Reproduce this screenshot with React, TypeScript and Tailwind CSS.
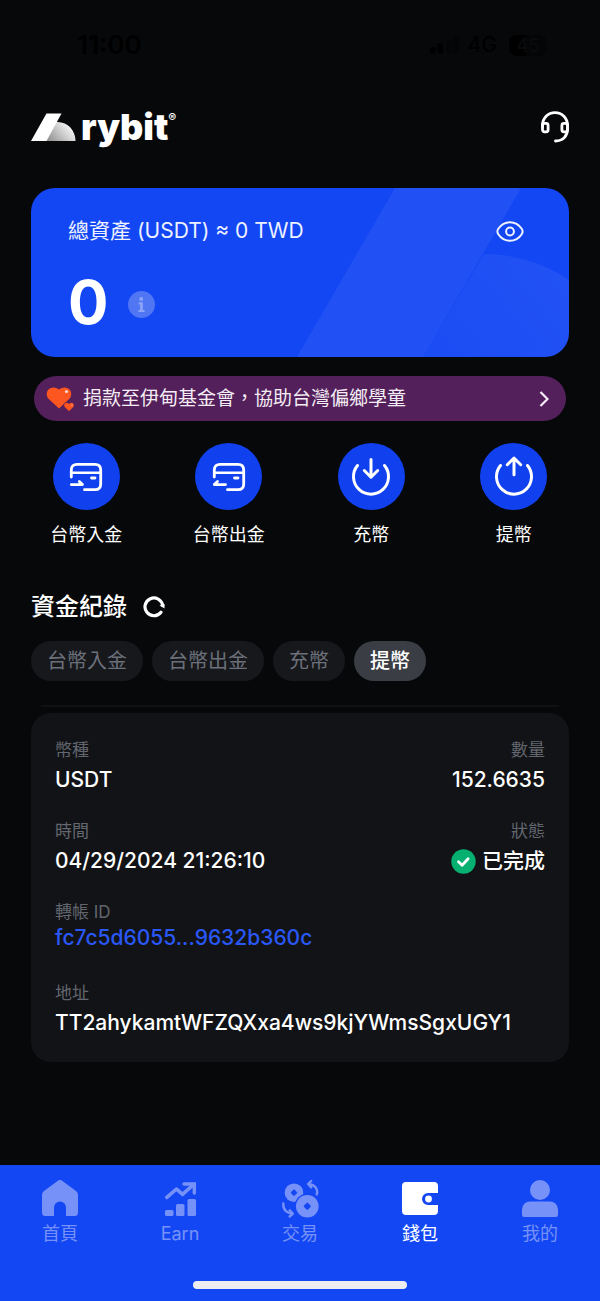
import { useState } from 'react';
import type { ReactNode } from 'react';

const actions = [
  { label: '台幣入金', icon: <CardIcon arrow="in" /> },
  { label: '台幣出金', icon: <CardIcon arrow="out" /> },
  { label: '充幣', icon: <TransferIcon direction="down" /> },
  { label: '提幣', icon: <TransferIcon direction="up" /> },
];

const filters = ['台幣入金', '台幣出金', '充幣', '提幣'];

const tabs = [
  { label: '首頁', icon: <HomeIcon /> },
  { label: 'Earn', icon: <EarnIcon /> },
  { label: '交易', icon: <TradeIcon /> },
  { label: '錢包', icon: <WalletIcon /> },
  { label: '我的', icon: <ProfileIcon /> },
];

function StatusBar() {
  return (
    <div className="flex items-center justify-between pl-[77px] pr-[53px] pt-[30px] text-black">
      <span className="text-[26px] leading-[30px] font-semibold">11:00</span>
      <div className="flex items-center gap-2">
        <svg width="30" height="20" viewBox="0 0 32 20" fill="currentColor">
          <rect x="0" y="12" width="6" height="7" rx="2" />
          <rect x="8" y="8" width="6" height="11" rx="2" />
          <rect x="17" y="4" width="6" height="15" rx="2" opacity="0.3" />
          <rect x="25" y="0" width="6" height="19" rx="2" opacity="0.3" />
        </svg>
        <span className="text-[21px] leading-[30px] font-medium">4G</span>
        <span className="ml-1 h-[21px] w-[38px] rounded-[7px] bg-linear-to-r from-black from-45% to-[#040506] to-45% text-center text-[18px] leading-[21px] font-semibold text-[#090a0b]">
          45
        </span>
      </div>
    </div>
  );
}

function Logo() {
  return (
    <div className="flex items-center text-white">
      <svg width="45" height="28" viewBox="0 0 45 28">
        <defs>
          <linearGradient id="dome" x1="16" y1="28" x2="38" y2="8" gradientUnits="userSpaceOnUse">
            <stop offset="0" stopColor="#8d8d8d" />
            <stop offset="1" stopColor="#fff" />
          </linearGradient>
        </defs>
        <path d="M25 9C36 8 44.500 17 44.500 28H15z" fill="url(#dome)" />
        <path d="M15.500 .5H30.500L15.500 28H0z" fill="#fff" />
      </svg>
      <span className="ml-[5px] text-[36px] leading-[36px] font-black">rybit</span>
      <span className="mb-[18px] text-[12px] leading-[10px] font-semibold">®</span>
    </div>
  );
}

function HeadsetIcon() {
  return (
    <svg width="28" height="32" viewBox="0 0 28 32" fill="none" stroke="currentColor" strokeWidth="2.800" strokeLinecap="round">
      <path d="M1.500 16V14.500C1.500 7 7 1.700 14 1.700S26.500 7 26.500 14.500V18c0 7-4.500 12-12 12" />
      <rect x="1.500" y="12.400" width="5.600" height="8.400" rx="2" />
      <rect x="20.900" y="12.400" width="5.600" height="8.400" rx="2" />
    </svg>
  );
}

function EyeIcon() {
  return (
    <svg width="28" height="21" viewBox="0 0 28 21" fill="none" stroke="currentColor" strokeWidth="2">
      <path d="M14 1.200c5.500 0 9.300 3 11.700 6.600 1.200 1.800 1.200 3.600 0 5.400C23.300 16.800 19.500 19.800 14 19.800S4.700 16.800 2.300 13.200c-1.200-1.800-1.200-3.600 0-5.400C4.700 4.200 8.500 1.200 14 1.200z" />
      <circle cx="14" cy="10.500" r="3.900" />
    </svg>
  );
}

function HeartsIcon() {
  return (
    <svg width="29" height="26" viewBox="0 0 29 26">
      <path d="M13 22.500L2.500 12.700C.2 10.400.2 5.800 2.500 3.500 5 .8 9.500.6 13 3.500 16.500.6 21 .8 23.500 3.500c2.300 2.300 2.300 6.900 0 9.200z" fill="#fd5621" />
      <path d="M23 25.500l-4.500-4.300c-2.300-3 1.500-6.500 4.500-3.700 3-2.800 6.800.7 4.500 3.700z" fill="#fd5621" stroke="#53205b" strokeWidth=".7" />
      <circle cx="20.500" cy="5.500" r="1.600" fill="#ffd9d2" />
      <circle cx="26" cy="19.200" r=".7" fill="#ffb8a5" />
    </svg>
  );
}

function CardIcon({ arrow }: { arrow: 'in' | 'out' }) {
  return (
    <svg width="34" height="30" viewBox="0 0 34 30" fill="none" stroke="currentColor" strokeWidth="2.800" strokeLinecap="round" strokeLinejoin="round">
      <path d="M2.300 15V8C2.300 4.500 4.500 2.300 8 2.300H26c3.500 0 5.700 2.200 5.700 5.700V22c0 3.500-2.200 5.700-5.700 5.700H15.500" />
      <path d="M2.300 10.800H31.500" strokeWidth="2.600" />
      <path d="M22.500 16h3.500" />
      {arrow === 'in' ? <path d="M2.300 22.600H13.500L10.300 19.500" /> : <path d="M13.500 22.600H2.300L5.500 19.500" />}
    </svg>
  );
}

function TransferIcon({ direction }: { direction: 'up' | 'down' }) {
  return (
    <svg width="40" height="42" viewBox="0 0 40 42" fill="none" stroke="currentColor" strokeWidth="3" strokeLinecap="round" strokeLinejoin="round">
      <path d="M6.500 9.500a17.500 17.500 0 1 0 27 0" />
      {direction === 'down' ? <path d="M20 3.500v17M13.300 14.500l6.700 6.700 6.700-6.700" /> : <path d="M20 18.700V2.500M13.300 8.700l6.700-6.700 6.700 6.700" />}
    </svg>
  );
}

function ReloadIcon() {
  return (
    <svg width="22" height="22" viewBox="0 0 22 22" fill="none" stroke="currentColor" strokeWidth="3.200" strokeLinecap="round">
      <path d="M18 16.200A8.900 8.900 0 1 1 19.700 9.500" />
      <path d="M21.500 8V12.500L16.500 9.500z" fill="currentColor" stroke="none" />
    </svg>
  );
}

function HomeIcon() {
  return (
    <svg width="36" height="36" viewBox="0 0 36 36" fill="currentColor">
      <path d="M16.200.6a3 3 0 0 1 3.600 0L34 11a5 5 0 0 1 2 4V32.500A3.500 3.500 0 0 1 32.500 36H24V27.500a6 6 0 0 0-12 0V36H3.500A3.500 3.500 0 0 1 0 32.500V15a5 5 0 0 1 2-4z" />
    </svg>
  );
}

function EarnIcon() {
  return (
    <svg width="36" height="36" viewBox="0 0 36 36" fill="currentColor">
      <path d="M4.800 17.300L14.500 9l6 5.300L31 5" fill="none" stroke="currentColor" strokeWidth="3.600" strokeLinecap="round" strokeLinejoin="round" />
      <path d="M22 4H32.300V13" fill="none" stroke="currentColor" strokeWidth="3.400" strokeLinecap="round" />
      <rect x="3" y="30" width="8.500" height="6" rx="1.500" />
      <rect x="14" y="24" width="8.500" height="12" rx="1.500" />
      <rect x="25.500" y="19" width="8.500" height="17" rx="1.500" />
    </svg>
  );
}

function TradeIcon() {
  return (
    <svg className="overflow-visible" width="38" height="38" viewBox="0 0 38 38" fill="none" stroke="currentColor">
      <defs>
        <mask id="back-coin">
          <rect width="38" height="38" fill="#fff" stroke="none" />
          <rect x="10.500" y="11.200" width="5" height="5" rx="1" transform="rotate(45 13 13.700)" fill="#000" stroke="none" />
          <circle cx="26.300" cy="27.200" r="12.700" fill="#000" stroke="none" />
        </mask>
        <mask id="front-coin">
          <rect width="38" height="39" fill="#fff" stroke="none" />
          <rect x="23.500" y="24.400" width="5.600" height="5.600" rx="1" transform="rotate(45 26.300 27.200)" fill="#000" stroke="none" />
        </mask>
      </defs>
      <circle cx="13" cy="13.700" r="9.300" fill="currentColor" stroke="none" mask="url(#back-coin)" />
      <circle cx="26.300" cy="27.200" r="11.300" fill="currentColor" stroke="none" mask="url(#front-coin)" />
      <path d="M2.300 24.300c-.3 5 2.200 9.500 9.200 10.300M8.700 31.300l3.300 3.400-3.400 2.800" strokeWidth="2.300" strokeLinecap="round" strokeLinejoin="round" />
      <path d="M35.800 15.500c1.500-5-1.500-10-8.300-10.500M30.200 2l-3.200 3 3.200 3.400" strokeWidth="2.300" strokeLinecap="round" strokeLinejoin="round" />
    </svg>
  );
}

function WalletIcon() {
  return (
    <svg width="36" height="36" viewBox="0 0 36 36" fill="currentColor">
      <path d="M4 2H32a4 4 0 0 1 4 4v7H26a6 6 0 0 0 0 12H36v6a4 4 0 0 1-4 4H4a4 4 0 0 1-4-4V6a4 4 0 0 1 4-4z" />
      <circle cx="26.500" cy="19" r="3.400" />
    </svg>
  );
}

function ProfileIcon() {
  return (
    <svg width="36" height="37" viewBox="0 0 36 37" fill="currentColor">
      <circle cx="18" cy="10" r="10" />
      <path d="M8 21.500H28a8 8 0 0 1 8 8V35a2 2 0 0 1-2 2H2a2 2 0 0 1-2-2V29.500a8 8 0 0 1 8-8z" />
    </svg>
  );
}

function BalanceCard() {
  return (
    <section className="relative overflow-hidden rounded-[24px] bg-[#1447f4] px-[37px] pt-7 pb-[21px]">
      {/* Enlarged brand mark behind the balance */}
      <svg className="absolute top-0 right-0 h-full" viewBox="0 0 272 169" fill="none">
        <defs>
          <linearGradient id="arc" x1="110" y1="150" x2="240" y2="50" gradientUnits="userSpaceOnUse">
            <stop offset="0" stopColor="#fff" stopOpacity="0.03" />
            <stop offset="1" stopColor="#fff" stopOpacity="0.06" />
          </linearGradient>
        </defs>
        <path d="M98 0H224L126 169H0z" fill="#fff" fillOpacity="0.06" />
        <path d="M187 66C219 66 250 77 272 92V169H126z" fill="url(#arc)" />
      </svg>
      <div className="relative flex items-center justify-between text-[#eef2ff]">
        <span className="text-[21px] leading-[30px]">總資產 (USDT) ≈ 0 TWD</span>
        <button type="button" aria-label="顯示資產" className="mr-2">
          <EyeIcon />
        </button>
      </div>
      <div className="relative mt-[22px] flex items-center gap-5">
        <span className="text-[60px] leading-[68px] font-bold text-white">0</span>
        <button type="button" aria-label="資產說明" className="mt-1">
          <svg width="27" height="27" viewBox="0 0 27 27">
            <circle cx="13.500" cy="13.500" r="13.500" fill="#5076f4" />
            <circle cx="13.200" cy="8" r="2" fill="#8ba4f8" />
            <path d="M10.700 11.300h4.200v7.600h1.700v2.200h-6.200v-2.200h1.700v-5.400h-1.400z" fill="#8ba4f8" />
          </svg>
        </button>
      </div>
    </section>
  );
}

function Field({ label, children, right }: { label: string; children: ReactNode; right?: boolean }) {
  return (
    <div className={right ? 'text-right' : ''}>
      <dt className="text-[17px] leading-6 text-[#62666f]">{label}</dt>
      <dd className="mt-1 text-[21px] leading-7 font-medium text-white">{children}</dd>
    </div>
  );
}

export default function App() {
  const [filter, setFilter] = useState('提幣');
  const [tab, setTab] = useState('錢包');

  return (
    <div lang="zh-Hant" className="flex min-h-screen flex-col bg-[#07080a] font-['Inter','Noto_Sans_CJK_TC',sans-serif]">
      <StatusBar />

      <header className="mt-[49px] flex items-center justify-between px-[31px] text-white">
        <Logo />
        <button type="button" aria-label="客服">
          <HeadsetIcon />
        </button>
      </header>

      <main className="flex-1 px-[31px] pt-[43px]">
        <BalanceCard />

        {/* Donation banner */}
        <a href="#donate" className="mx-[3px] mt-[19px] flex h-[45px] items-center rounded-full bg-[#53205b] pl-3 pr-[17px] text-[#f4edf5]">
          <HeartsIcon />
          <span className="ml-2 flex-1 text-[19px] leading-7">捐款至伊甸基金會，協助台灣偏鄉學童</span>
          <svg width="10" height="16" viewBox="0 0 10 16" fill="none" stroke="currentColor" strokeWidth="2.200">
            <path d="M1.500 1l7 7-7 7" />
          </svg>
        </a>

        {/* Quick actions */}
        <div className="-mx-4 mt-[22px] grid grid-cols-4">
          {actions.map((a) => (
            <button key={a.label} type="button" className="flex flex-col items-center text-white">
              <span className="flex h-[67px] w-[67px] items-center justify-center rounded-full bg-[#1141ef]">{a.icon}</span>
              <span className="mt-[13px] text-[18px] leading-6">{a.label}</span>
            </button>
          ))}
        </div>

        {/* Records */}
        <div className="mt-11 flex items-center gap-4 text-white">
          <h2 className="text-[24px] leading-8 font-medium">資金紀錄</h2>
          <button type="button" aria-label="重新整理">
            <ReloadIcon />
          </button>
        </div>
        <div className="mt-[18px] flex gap-[9px]">
          {filters.map((f) => (
            <button
              key={f}
              type="button"
              onClick={() => setFilter(f)}
              className={`h-10 rounded-full px-4 text-[20px] leading-7 ${
                filter === f ? 'bg-[#3b3d45] font-medium text-white' : 'bg-[#17181c] text-[#6b707a]'
              }`}
            >
              {f}
            </button>
          ))}
        </div>

        <hr className="mx-[10px] mt-6 border-t-2 border-[#101114]" />

        <dl className="mt-[6px] rounded-[20px] bg-[#121316] px-6 pt-[25px] pb-[25px]">
          <div className="flex justify-between">
            <Field label="幣種">USDT</Field>
            <Field label="數量" right>152.6635</Field>
          </div>
          <div className="mt-[25px] flex justify-between">
            <Field label="時間">04/29/2024 21:26:10</Field>
            <Field label="狀態" right>
              <span className="flex items-center gap-[6px]">
                <svg width="25" height="25" viewBox="0 0 25 25" fill="none">
                  <circle cx="12.500" cy="12.500" r="12.200" fill="#06b070" />
                  <path d="M7.500 12.800l3.600 3.400 6-6.400" stroke="#fff" strokeWidth="2.800" strokeLinecap="round" strokeLinejoin="round" />
                </svg>
                已完成
              </span>
            </Field>
          </div>
          <div className="mt-[25px]">
            <dt className="text-[17px] leading-6 text-[#62666f]">轉帳 ID</dt>
            <dd className="text-[21px] leading-7 font-medium">
              <a href="#tx" className="text-[#2a58f6]">fc7c5d6055...9632b360c</a>
            </dd>
          </div>
          <div className="mt-[29px]">
            <Field label="地址">TT2ahykamtWFZQXxa4ws9kjYWmsSgxUGY1</Field>
          </div>
        </dl>
      </main>

      <nav className="bg-[#1447f4] pb-3">
        <div className="grid grid-cols-5 pt-[14px]">
          {tabs.map((t) => (
            <button
              key={t.label}
              type="button"
              onClick={() => setTab(t.label)}
              className={`flex flex-col items-center ${tab === t.label ? 'text-white' : 'text-[#7692f8]'}`}
            >
              <span className="flex h-[38px] items-center">{t.icon}</span>
              <span className="mt-[5px] text-[18px] leading-6">{t.label}</span>
            </button>
          ))}
        </div>
        <div className="mx-auto mt-[35px] h-2 w-[214px] rounded-full bg-[#eeeef0]" />
      </nav>
    </div>
  );
}
